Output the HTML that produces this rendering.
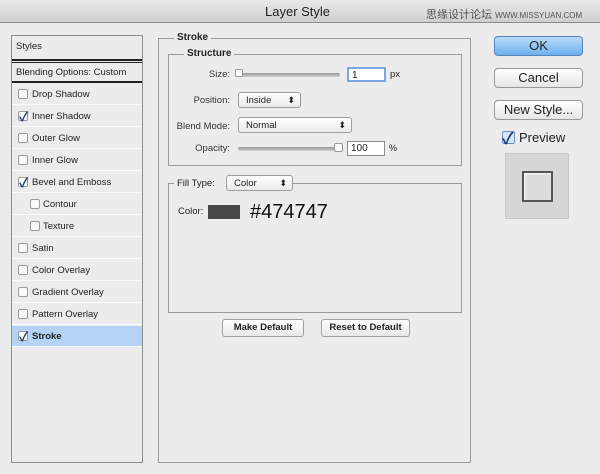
<!DOCTYPE html>
<html><head><style>
*{margin:0;padding:0;box-sizing:border-box}
body{width:600px;height:474px;background:#ececec;font-family:"Liberation Sans","Noto Sans CJK SC",sans-serif;font-size:10px;color:#222;position:relative;overflow:hidden}
.a{position:absolute}
.title{left:0;top:0;width:600px;height:23px;background:linear-gradient(#e9e9e9,#cfcfcf);border-bottom:1px solid #8a8a8a}
.panel{left:11px;top:35px;width:132px;height:428px;border:1px solid #8c8c8c;background:#ececec}
.row{position:absolute;left:0;width:130px;height:21px;border-bottom:1px solid #fafafa;line-height:21px;padding-left:20px;font-size:9.5px}
.cb{position:absolute;left:6px;top:5px;width:10px;height:10px;border:1px solid #9a9a9a;border-radius:2px;background:#fafafa}
.ck:after{content:"✓";position:absolute;left:0;top:-6px;font-size:13px;font-weight:bold;color:#1d3f7a}
.box{border:1px solid #9a9a9a}
.leg{background:#ececec;padding:0 3px;font-weight:bold;font-size:10px}
.sel{background:linear-gradient(#fff,#eaeaea);border:1px solid #9c9c9c;border-radius:3px;height:16px;line-height:15px;padding-left:7px;font-size:9.5px}
.sel:after{content:"⬍";position:absolute;right:5px;top:0;font-size:9px}
.lbl{text-align:right;font-size:9.5px;color:#333}
.sl{height:4px;background:linear-gradient(#999,#ccc);border-radius:2px}
.inp{background:#fff;border:1px solid #8d8d8d;font-size:10px;padding-left:3px;line-height:13px}
.btn{background:linear-gradient(#fff,#e6e6e6);border:1px solid #999;border-radius:4px;text-align:center;font-size:13px}
.sb{background:linear-gradient(#fff,#e8e8e8);border:1px solid #a0a0a0;border-radius:3px;text-align:center;font-size:9.5px;font-weight:bold;line-height:15px}
</style></head><body>
<div class="a title"></div>
<div class="a" style="left:265px;top:4px;font-size:13px;color:#222">Layer Style</div>
<div class="a" style="left:426px;top:6px;font-size:11px;color:#555">思缘设计论坛 <span style="font-size:8px;letter-spacing:0">WWW.MISSYUAN.COM</span></div>

<div class="a panel">
<div class="row" style="top:0;height:23px;padding-left:4px;line-height:22px;border:none">Styles</div>
<div class="a" style="left:0;top:23px;width:130px;height:4px;border-top:2px solid #222;border-bottom:1px solid #222"></div>
<div class="row" style="top:27px;padding-left:4px;height:20px;line-height:20px;border-bottom:2px solid #222">Blending Options: Custom</div>
<div class="row" style="top:48px"><span class="cb"></span>Drop Shadow</div>
<div class="row" style="top:70px"><span class="cb ck"></span>Inner Shadow</div>
<div class="row" style="top:92px"><span class="cb"></span>Outer Glow</div>
<div class="row" style="top:114px"><span class="cb"></span>Inner Glow</div>
<div class="row" style="top:136px"><span class="cb ck"></span>Bevel and Emboss</div>
<div class="row" style="top:158px;padding-left:31px"><span class="cb" style="left:18px"></span>Contour</div>
<div class="row" style="top:180px;padding-left:31px"><span class="cb" style="left:18px"></span>Texture</div>
<div class="row" style="top:202px"><span class="cb"></span>Satin</div>
<div class="row" style="top:224px"><span class="cb"></span>Color Overlay</div>
<div class="row" style="top:246px"><span class="cb"></span>Gradient Overlay</div>
<div class="row" style="top:268px"><span class="cb"></span>Pattern Overlay</div>
<div class="row" style="top:290px;background:#b5d3f5;font-weight:bold"><span class="cb ck"></span>Stroke</div>
</div>

<div class="a box" style="left:158px;top:38px;width:313px;height:425px"></div>
<div class="a leg" style="left:174px;top:32px">Stroke</div>
<div class="a box" style="left:168px;top:54px;width:294px;height:112px"></div>
<div class="a leg" style="left:184px;top:48px">Structure</div>

<div class="a lbl" style="left:180px;top:69px;width:50px">Size:</div>
<div class="a sl" style="left:238px;top:73px;width:102px"></div>
<div class="a" style="left:235px;top:69px;width:8px;height:8px;background:#fff;border:1px solid #999;border-radius:2px"></div>
<div class="a inp" style="left:347px;top:67px;width:39px;height:15px;border:2px solid #7aa7df">1</div>
<div class="a" style="left:390px;top:69px;font-size:9.5px">px</div>

<div class="a lbl" style="left:170px;top:95px;width:60px">Position:</div>
<div class="a sel" style="left:238px;top:92px;width:63px">Inside</div>
<div class="a lbl" style="left:170px;top:121px;width:60px">Blend Mode:</div>
<div class="a sel" style="left:238px;top:117px;width:114px">Normal</div>
<div class="a lbl" style="left:170px;top:143px;width:60px">Opacity:</div>
<div class="a sl" style="left:238px;top:147px;width:102px"></div>
<div class="a" style="left:334px;top:143px;width:9px;height:9px;background:#fff;border:1px solid #999;border-radius:2px"></div>
<div class="a inp" style="left:347px;top:141px;width:38px;height:15px">100</div>
<div class="a" style="left:389px;top:143px;font-size:9px">%</div>

<div class="a box" style="left:168px;top:183px;width:294px;height:130px"></div>
<div class="a" style="left:174px;top:176px;width:118px;height:16px;background:#ececec"></div>
<div class="a" style="left:177px;top:178px;font-size:9.5px">Fill Type:</div>
<div class="a sel" style="left:226px;top:175px;width:67px">Color</div>
<div class="a" style="left:178px;top:206px;font-size:9.5px">Color:</div>
<div class="a" style="left:208px;top:205px;width:32px;height:14px;background:#474747"></div>
<div class="a" style="left:250px;top:201px;font-size:20px;color:#111">#474747</div>

<div class="a sb" style="left:222px;top:319px;width:82px;height:18px">Make Default</div>
<div class="a sb" style="left:321px;top:319px;width:89px;height:18px">Reset to Default</div>

<div class="a btn" style="left:494px;top:36px;width:89px;height:20px;background:linear-gradient(#b9dcfa,#6cb0ef);border-color:#5a83b8;line-height:18px">OK</div>
<div class="a btn" style="left:494px;top:68px;width:89px;height:20px;line-height:18px">Cancel</div>
<div class="a btn" style="left:494px;top:100px;width:89px;height:20px;line-height:18px">New Style...</div>
<div class="a" style="left:502px;top:131px;width:13px;height:13px;border:1px solid #6a8fc0;border-radius:2px;background:#d8e8fa"></div>
<div class="a" style="left:502px;top:125px;font-size:16px;font-weight:bold;color:#1d3f7a">✓</div>
<div class="a" style="left:519px;top:130px;font-size:13px">Preview</div>
<div class="a" style="left:505px;top:153px;width:64px;height:66px;background:#d6d6d6;border:1px solid #c8c8c8"></div>
<div class="a" style="left:522px;top:171px;width:31px;height:31px;background:#dcdcdc;border:2px solid #555;box-shadow:inset 1px 1px 2px #fff"></div>
</body></html>
